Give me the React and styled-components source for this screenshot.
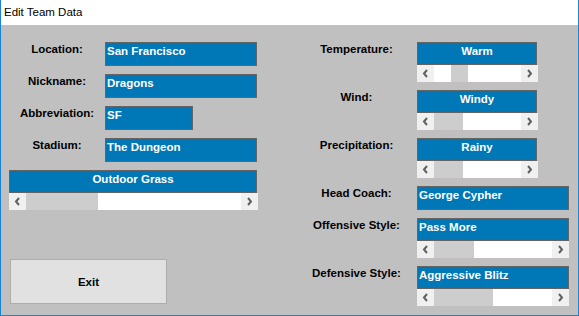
import React from 'react'
import styled, { createGlobalStyle } from 'styled-components'

const GlobalStyle = createGlobalStyle`
	html, body {
		margin: 0;
		padding: 0;
		background: #ffffff;
	}
	body {
		font-family: "Liberation Sans", Arial, sans-serif;
	}
`

const Window = styled.div`
	box-sizing: border-box;
	width: 579px;
	height: 316px;
	display: flex;
	flex-direction: column;
	border: 1px solid #1883d7;
	border-top: none;
	background: #c0c0c0;
	overflow: hidden;
`

const TitleBar = styled.div`
	height: 25px;
	flex: none;
	background: #ffffff;
	padding-left: 3px;
	font-size: 11.5px;
	line-height: 25px;
	color: #000000;
`

const Body = styled.div`
	display: flex;
	flex: 1;
`

const Column = styled.div`
	display: flex;
	flex-direction: column;
	width: ${ p => p.width }px;
	padding-left: ${ p => p.left }px;
	padding-top: 17px;
	box-sizing: border-box;
`

const Row = styled.div`
	display: flex;
	align-items: flex-start;
	margin-bottom: ${ p => p.gap }px;
`

const Label = styled.div`
	width: ${ p => p.width }px;
	flex: none;
	text-align: center;
	font-size: 11.5px;
	font-weight: bold;
	padding-top: 1px;
	color: #000000;
	white-space: nowrap;
`

const Stack = styled.div`
	display: flex;
	flex-direction: column;
	width: ${ p => p.width }px;
`

const Box = styled.div`
	box-sizing: border-box;
	width: ${ p => p.width }px;
	height: ${ p => p.short ? 23 : 24 }px;
	background: #0077b6;
	border: 1px solid #646464;
	color: #ffffff;
	font-size: 11.5px;
	font-weight: bold;
	padding: 2px 1px 0;
	text-align: ${ p => p.center ? 'center' : 'left' };
	white-space: nowrap;
	overflow: hidden;
`

const Bar = styled.div`
	display: flex;
	height: 17px;
	width: ${ p => p.width }px;
	background: #ffffff;
`

const ArrowButton = styled.div`
	width: 17px;
	flex: none;
	display: flex;
	align-items: center;
	justify-content: center;
	background: #f0f0f0;
`

const Track = styled.div`
	flex: 1;
	position: relative;
`

const Thumb = styled.div`
	position: absolute;
	top: 0;
	bottom: 0;
	background: #cdcdcd;
`

const ExitButton = styled.button`
	box-sizing: border-box;
	width: 157px;
	height: 45px;
	margin-left: 1px;
	background: #e1e1e1;
	border: 1px solid #adadad;
	font-family: "Liberation Sans", Arial, sans-serif;
	font-size: 11.5px;
	font-weight: bold;
	color: #000000;
	padding: 0;
`

const Chevron = ( { dir } ) => (
	<svg width="7" height="9" viewBox="0 0 7 9">
		<path
			d={ dir === 'left' ? 'M5 1 L2 4.5 L5 8' : 'M2 1 L5 4.5 L2 8' }
			fill="none"
			stroke="#606060"
			strokeWidth="2"
		/>
	</svg>
)

const ScrollBar = ( { width, thumbLeft, thumbWidth } ) => (
	<Bar width={ width }>
		<ArrowButton><Chevron dir="left" /></ArrowButton>
		<Track>
			<Thumb style={ { left: thumbLeft, width: thumbWidth } } />
		</Track>
		<ArrowButton><Chevron dir="right" /></ArrowButton>
	</Bar>
)

const leftFields = [
	{ label: 'Location:', value: 'San Francisco', width: 152 },
	{ label: 'Nickname:', value: 'Dragons', width: 152 },
	{ label: 'Abbreviation:', value: 'SF', width: 88 },
	{ label: 'Stadium:', value: 'The Dungeon', width: 152 }
]

const rightFields = [
	{ label: 'Temperature:', value: 'Warm', width: 120, center: true, scroll: { width: 121, left: 17, size: 17 } },
	{ label: 'Wind:', value: 'Windy', width: 120, center: true, scroll: { width: 121, left: 0, size: 29 } },
	{ label: 'Precipitation:', value: 'Rainy', width: 120, center: true, scroll: { width: 121, left: 0, size: 29 } },
	{ label: 'Head Coach:', value: 'George Cypher', width: 152 },
	{ label: 'Offensive Style:', value: 'Pass More', width: 152, scroll: { width: 152, left: 0, size: 40 } },
	{ label: 'Defensive Style:', value: 'Aggressive Blitz', width: 152, scroll: { width: 152, left: 0, size: 59 } }
]

export default function App() {
	return (
		<>
			<GlobalStyle />
			<Window>
				<TitleBar>Edit Team Data</TitleBar>
				<Body>
					<Column width={ 295 } left={ 8 }>
						{
							leftFields.map( ( field, key ) => (
								<Row gap={ 8 } key={ key }>
									<Label width={ 96 }>{ field.label }</Label>
									<Box width={ field.width }>{ field.value }</Box>
								</Row>
							) )
						}
						<Stack width={ 249 }>
							<Box width={ 248 } short center>Outdoor Grass</Box>
							<ScrollBar width={ 249 } thumbLeft={ 0 } thumbWidth={ 72 } />
						</Stack>
						<Row gap={ 0 } style={ { marginTop: 49 } }>
							<ExitButton>Exit</ExitButton>
						</Row>
					</Column>
					<Column width={ 282 } left={ 0 }>
						{
							rightFields.map( ( field, key ) => (
								<Row gap={ 8 } key={ key }>
									<Label width={ 121 }>{ field.label }</Label>
									<Stack width={ field.width }>
										<Box width={ field.width } short={ !!field.scroll } center={ field.center }>
											{ field.value }
										</Box>
										{
											field.scroll && (
												<ScrollBar
													width={ field.scroll.width }
													thumbLeft={ field.scroll.left }
													thumbWidth={ field.scroll.size }
												/>
											)
										}
									</Stack>
								</Row>
							) )
						}
					</Column>
				</Body>
			</Window>
		</>
	)
}
